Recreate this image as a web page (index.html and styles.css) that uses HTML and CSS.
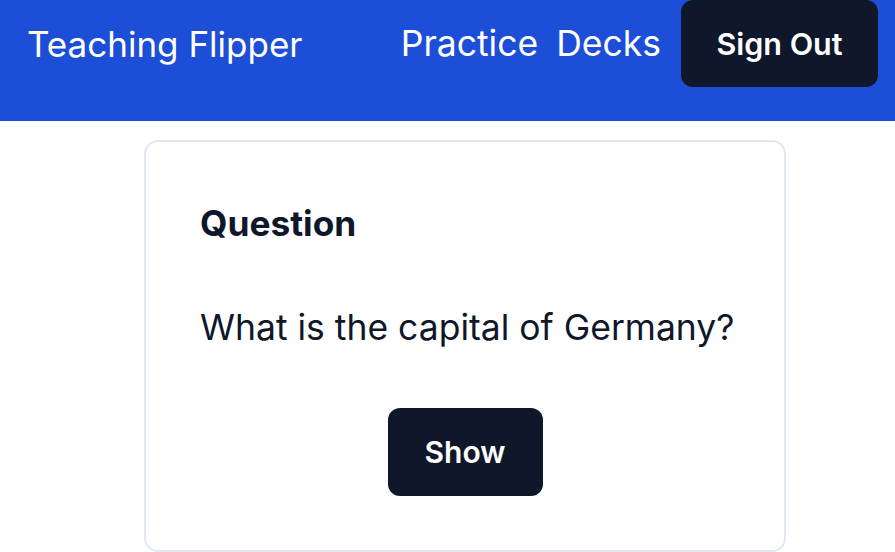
FILE: index.html
```html
<!DOCTYPE html>
<html>
<head>
<meta charset="utf-8">
<link rel="stylesheet" href="styles.css">
</head>
<body>
<header class="topbar">
  <div class="brand">Teaching Flipper</div>
  <nav class="nav">
    <a class="nav-link" href="#">Practice</a>
    <a class="nav-link" href="#">Decks</a>
    <button class="btn btn-signout">Sign Out</button>
  </nav>
</header>
<main class="main">
  <section class="card">
    <h2 class="card-title">Question</h2>
    <p class="card-text">What is the capital of Germany?</p>
    <div class="card-actions">
      <button class="btn btn-show">Show</button>
    </div>
  </section>
</main>
</body>
</html>
```
FILE: styles.css
```css
* { box-sizing: border-box; }
html, body { margin: 0; padding: 0; }
body {
  font-family: Inter, "Noto Sans", sans-serif;
  background: #ffffff;
  color: #0f172a;
}
.topbar {
  height: 121px;
  background: #1d4ed8;
  display: flex;
  align-items: flex-start;
  justify-content: space-between;
  padding: 0 17px 0 27px;
}
.brand {
  color: #ffffff;
  font-size: 35px;
  line-height: 88px;
  white-space: nowrap;
}
.nav {
  display: flex;
  align-items: flex-start;
  gap: 18px;
}
.nav-link {
  color: #ffffff;
  text-decoration: none;
  font-size: 35.5px;
  line-height: 88px;
}
.btn {
  font-family: Inter, "Noto Sans", sans-serif;
  background: #0f172a;
  color: #ffffff;
  border: none;
  border-radius: 12px;
  font-weight: 600;
  cursor: pointer;
}
.btn-signout {
  height: 87px;
  width: 197px;
  font-size: 30.5px;
  margin-left: 2px;
}
.main {
  padding: 19px 0 0 144px;
}
.card {
  width: 642px;
  border: 2px solid #e2e8f0;
  border-radius: 14px;
  padding: 58px 54px 54px 54px;
}
.card-title {
  margin: 0;
  font-size: 35.3px;
  font-weight: 700;
  line-height: 48px;
}
.card-text {
  margin: 56px 0 0 0;
  font-size: 35.5px;
  font-weight: 400;
  line-height: 48px;
  white-space: nowrap;
}
.card-actions {
  display: flex;
  justify-content: center;
  margin-top: 56px;
}
.btn-show {
  width: 155px;
  height: 88px;
  font-size: 30px;
}
```
